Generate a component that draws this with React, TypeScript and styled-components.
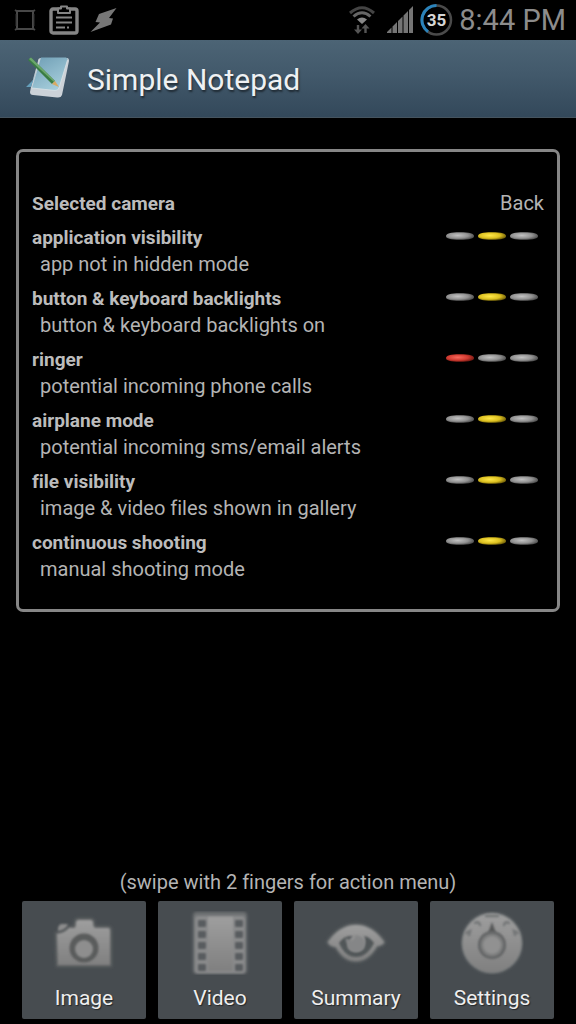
import React from "react";
import styled, { createGlobalStyle } from "styled-components";

const GlobalStyle = createGlobalStyle`
  *, *::before, *::after { box-sizing: border-box; }
  html, body { margin: 0; background: #000; }
  body {
    font-family: Roboto, "Liberation Sans", sans-serif;
    font-variant-ligatures: none;
    color: #b4b4b4;
  }
`;

const Screen = styled.div`
  min-height: 100vh;
  display: flex;
  flex-direction: column;
  background: #000;
`;

const StatusBar = styled.div`
  height: 40px;
  padding: 0 10px 0 12px;
  display: flex;
  align-items: center;
  justify-content: space-between;
  background: #000;
`;

const StatusGroup = styled.div<{ $gap: number }>`
  display: flex;
  align-items: center;
  gap: ${(p) => p.$gap}px;
`;

const Clock = styled.time`
  font-size: 29px;
  line-height: 40px;
  color: #8c8c8c;
  white-space: nowrap;
`;

const TitleBar = styled.header`
  height: 78px;
  padding: 2px 24px 0;
  display: flex;
  align-items: center;
  gap: 15px;
  background: linear-gradient(#4c6475, #42596b 45%, #33485a);
  border-bottom: 1px solid #46545f;
`;

const Title = styled.h1`
  margin: 0;
  font-size: 30px;
  line-height: 40px;
  font-weight: 400;
  color: #eef1f3;
  text-shadow: 1px 2px 2px rgba(0, 0, 0, 0.5);
`;

const Panel = styled.section`
  margin: 31px 16px 0;
  padding: 38px 13px 19px;
  border: 3px solid #868686;
  border-radius: 7px;
`;

const Row = styled.div`
  display: flex;
  justify-content: space-between;
  font-size: 20px;
  line-height: 27px;
`;

const CameraRow = styled(Row)`
  margin-bottom: 7px;
`;

const StatusRow = styled(Row)`
  height: 61px;
`;

const Name = styled.h2`
  margin: 0;
  font-size: 19px;
  line-height: 27px;
  font-weight: 700;
  color: #bcbcbc;
`;

const Detail = styled.p`
  margin: 0;
  padding-left: 8px;
`;

const Leds = styled.svg`
  flex: none;
  margin: 7px 4px 0 0;
`;

const Footer = styled.footer`
  margin-top: auto;
  padding: 16px 22px 5px;
`;

const Hint = styled.p`
  margin: 0 0 5px;
  font-size: 20px;
  line-height: 27px;
  text-align: center;
`;

const Actions = styled.nav`
  display: grid;
  grid-template-columns: repeat(4, 1fr);
  gap: 12px;
`;

const ActionButton = styled.button`
  height: 118px;
  padding: 10px 0 0;
  display: flex;
  flex-direction: column;
  align-items: center;
  gap: 9px;
  border: 0;
  border-radius: 2px;
  background: #474c50;
  color: #eee;
  font-family: inherit;
  font-size: 21px;
  line-height: 28px;
  text-shadow: 1px 1px 1px rgba(0, 0, 0, 0.5);
`;

type Lamp = "off" | "yellow" | "red";

const lampStops: Record<Lamp, [string, string, string]> = {
  off: ["#c2c2c2", "#929292", "#4c4c4c"],
  yellow: ["#ffe84a", "#dcc020", "#6d5c08"],
  red: ["#f8685c", "#d03a30", "#701812"],
};

const statuses: { name: string; detail: string; lamps: Lamp[] }[] = [
  { name: "application visibility", detail: "app not in hidden mode", lamps: ["off", "yellow", "off"] },
  { name: "button & keyboard backlights", detail: "button & keyboard backlights on", lamps: ["off", "yellow", "off"] },
  { name: "ringer", detail: "potential incoming phone calls", lamps: ["red", "off", "off"] },
  { name: "airplane mode", detail: "potential incoming sms/email alerts", lamps: ["off", "yellow", "off"] },
  { name: "file visibility", detail: "image & video files shown in gallery", lamps: ["off", "yellow", "off"] },
  { name: "continuous shooting", detail: "manual shooting mode", lamps: ["off", "yellow", "off"] },
];

const Defs = styled.svg`
  position: absolute;
`;

function SharedDefs() {
  return (
    <Defs width="0" height="0" aria-hidden="true">
      <defs>
        {(Object.keys(lampStops) as Lamp[]).map((k) => (
          <radialGradient key={k} id={`lamp-${k}`} cx="0.42" cy="0.42" r="0.62">
            <stop offset="0" stopColor={lampStops[k][0]} />
            <stop offset="0.6" stopColor={lampStops[k][1]} />
            <stop offset="1" stopColor={lampStops[k][2]} />
          </radialGradient>
        ))}
        <linearGradient id="metal" x1="0" y1="0" x2="0" y2="1">
          <stop offset="0" stopColor="#9e9e9e" />
          <stop offset="1" stopColor="#808080" />
        </linearGradient>
        <filter id="glow" x="-20%" y="-20%" width="140%" height="140%">
          <feGaussianBlur stdDeviation="1.6" />
        </filter>
        <filter id="soft" x="-20%" y="-20%" width="140%" height="140%">
          <feGaussianBlur stdDeviation="0.8" />
        </filter>
      </defs>
    </Defs>
  );
}

function LampRow({ lamps }: { lamps: Lamp[] }) {
  return (
    <Leds width="96" height="10" viewBox="0 0 96 10" role="img" aria-label={lamps.join(", ")}>
      {lamps.map((l, i) => (
        <path
          key={i}
          transform={`translate(${i * 32} 0)`}
          d="M2 5C2 2.5 6 1.2 16 1.2S30 2.5 30 5S26 8.8 16 8.8S2 7.5 2 5Z"
          fill={`url(#lamp-${l})`}
        />
      ))}
    </Leds>
  );
}

function FrameIcon() {
  return (
    <svg width="26" height="26" viewBox="0 0 26 26" fill="none" stroke="#484848" strokeWidth="2">
      <path d="M5 4H21V22H5Z" />
      <path d="M3 3L6 5M23 3L20 5M3 23L6 21M23 23L20 21" strokeWidth="2" />
      <path d="M4 7V19M22 7V19" stroke="#333" strokeWidth="1" />
    </svg>
  );
}

function ClipboardIcon() {
  return (
    <svg width="30" height="30" viewBox="0 0 30 30" fill="none" stroke="#858585">
      <rect x="2" y="4" width="26" height="24" rx="2" strokeWidth="3.4" />
      <path d="M9 8V3.5H12V1.5H18V3.5H21V8Z" fill="#000" strokeWidth="2" strokeLinejoin="round" />
      <path d="M7 12.5H23M7 17.5H23M7 22.5H16M18 22.5H20" strokeWidth="2.2" />
    </svg>
  );
}

function BoltIcon() {
  return (
    <svg width="27" height="26" viewBox="0 0 27 26" fill="#777">
      <path d="M26.500 1L9 7L5.500 15L10 15.500L0.500 25L21 17.500L23 11.500L19 11Z" />
    </svg>
  );
}

function WifiIcon() {
  return (
    <svg width="32" height="30" viewBox="0 0 32 30" fill="none" stroke="#555" strokeWidth="3">
      <path d="M2 8Q14 -2.500 26 8" stroke="#444" />
      <path d="M5.500 11.500Q14 4 22.500 11.500" stroke="#666" />
      <path d="M9 14.500Q14 10.500 19 14.500L14 19Z" fill="#888" stroke="none" />
      <path d="M10 20V26M17.500 28V22" stroke="#555" strokeWidth="2.400" />
      <path d="M6 24.500H14L10 29ZM13.500 23.500H21.500L17.500 19Z" fill="#555" stroke="none" />
    </svg>
  );
}

function SignalIcon() {
  return (
    <svg width="28" height="28" viewBox="0 0 28 28" fill="#757575">
      <path d="M1 27V26L5.500 21.500V27ZM6.500 27V20.500L11 16V27ZM12 27V15L16.500 10.500V27ZM17.500 27V9.500L22 5V27ZM23 27V4L27 0V27Z" />
    </svg>
  );
}

function BatteryIcon() {
  return (
    <svg width="33" height="34" viewBox="0 0 33 34" role="img" aria-label="Battery 35%">
      <circle cx="16.500" cy="17" r="14.500" fill="none" stroke="#4a4a4a" strokeWidth="2.500" />
      <path d="M8 28.800A14.500 14.500 0 0 1 16.500 2.500" fill="none" stroke="#2a83bb" strokeWidth="3" />
      <text x="16.500" y="23" textAnchor="middle" fontSize="17" fontWeight="700" fill="#d6d6d6">35</text>
    </svg>
  );
}

function NotepadIcon() {
  return (
    <svg width="48" height="48" viewBox="0 0 48 48">
      <defs>
        <linearGradient id="cover" x1="0" y1="0" x2="0.6" y2="1">
          <stop offset="0" stopColor="#6e9db4" />
          <stop offset="1" stopColor="#a5cddb" />
        </linearGradient>
      </defs>
      <path d="M17 2H43Q45 2 45 5L38 39Q37 42 33 41.500L9 39Q6 39 6 36L7 31L14 5Q14 2 17 2Z" fill="#ccd2d8" />
      <path d="M17 1.500H42Q44 2 43.500 4L35 32Q34 34.500 31 34.500L8 32Z" fill="url(#cover)" />
      <path d="M43.500 4L35 32Q34 34.500 31 34.500L8 32" fill="none" stroke="#dbe3e7" strokeWidth="0.800" />
      <path d="M7 31L13 13L9 24L2 31Z" fill="#659fbb" />
      <path d="M4 4L7 1.500L31 25L28 28Z" fill="#397c43" />
      <path d="M5 3L7 1.500L31 25L30 26Z" fill="#6ba66c" />
      <path d="M28 28L31 25L35 31Z" fill="#d9aa62" />
    </svg>
  );
}

function CameraIcon() {
  const body = "M5 23Q13 22 17 17H22Q24 17 24 12Q24 9 27 9H38Q41 9 41 12Q41 17 44 17H56Q58 17 58 20V54H6Z";
  return (
    <svg width="64" height="64" viewBox="0 0 64 64">
      <path d={body} fill="#5e6264" stroke="#5e6264" strokeWidth="4" filter="url(#glow)" />
      <path d={body} fill="url(#metal)" filter="url(#soft)" />
      <path d="M6 20V17Q7 13 10 13H16Q14 19 6 20Z" fill="#8c8c8c" filter="url(#soft)" />
      <circle cx="32" cy="37" r="14.500" fill="#5a5b5c" filter="url(#soft)" />
      <circle cx="32" cy="38" r="9" fill="#8e8e8e" filter="url(#soft)" />
    </svg>
  );
}

function FilmIcon() {
  return (
    <svg width="64" height="64" viewBox="0 0 64 64">
      <rect x="5" y="1" width="54" height="62" rx="4" fill="#707375" filter="url(#glow)" />
      <rect x="7" y="5" width="50" height="57" rx="3" fill="#8a8b8c" filter="url(#soft)" />
      <rect x="20" y="6" width="25" height="54" fill="url(#metal)" filter="url(#soft)" />
      {[9, 20, 31, 42, 53].map((y) => (
        <g key={y} fill="#585c5e" filter="url(#soft)">
          <rect x="10" y={y} width="8" height="7" rx="1" />
          <rect x="47" y={y} width="8" height="7" rx="1" />
        </g>
      ))}
    </svg>
  );
}

function EyeIcon() {
  const outline = "M4 31Q16 14 32 14T60 31Q59 34 53 35Q44 50 32 50T12 36Q5 35 4 31Z";
  return (
    <svg width="64" height="64" viewBox="0 0 64 64">
      <path d={outline} fill="#626668" stroke="#626668" strokeWidth="3" filter="url(#glow)" />
      <path d={outline} fill="url(#metal)" filter="url(#soft)" />
      <path d="M15 32Q20 24 29 25Q24 29 24 34Q26 41 32 41T41 33Q42 28 40 25Q46 26 50 32Q43 46 32 46T15 32Z" fill="#515658" filter="url(#soft)" />
      <path d="M22 27Q31 33 31 24Q41 25 41 33T32 41T23 33Q21 29 22 27Z" fill="#858687" filter="url(#soft)" />
    </svg>
  );
}

function DialIcon() {
  return (
    <svg width="64" height="64" viewBox="0 0 64 64">
      <circle cx="32" cy="32" r="30.500" fill="#707476" filter="url(#glow)" />
      <circle cx="32" cy="32" r="29.500" fill="url(#metal)" filter="url(#soft)" />
      <g fill="none" stroke="#727476" strokeWidth="2.500" strokeLinecap="round" filter="url(#soft)">
        <path d="M6 22L10 20L9 24M15 12Q19 10 20 14M26 5H38M44 14Q45 10 49 12M55 24L54 20L58 22" />
      </g>
      <path d="M32 11L36 22H28Z" fill="#565859" filter="url(#soft)" />
      <circle cx="32" cy="34" r="14" fill="#626465" filter="url(#soft)" />
      <circle cx="32" cy="34" r="11.500" fill="#7c7d7d" filter="url(#soft)" />
      <circle cx="32" cy="34" r="9" fill="#919191" filter="url(#soft)" />
    </svg>
  );
}

const actions = [
  { label: "Image", Icon: CameraIcon },
  { label: "Video", Icon: FilmIcon },
  { label: "Summary", Icon: EyeIcon },
  { label: "Settings", Icon: DialIcon },
];

export default function App() {
  return (
    <Screen>
      <GlobalStyle />
      <SharedDefs />
      <StatusBar>
        <StatusGroup $gap={11}>
          <FrameIcon />
          <ClipboardIcon />
          <BoltIcon />
        </StatusGroup>
        <StatusGroup $gap={6}>
          <WifiIcon />
          <SignalIcon />
          <BatteryIcon />
          <Clock>8:44 PM</Clock>
        </StatusGroup>
      </StatusBar>
      <TitleBar>
        <NotepadIcon />
        <Title>Simple Notepad</Title>
      </TitleBar>
      <main>
        <Panel>
          <CameraRow>
            <Name>Selected camera</Name>
            <span>Back</span>
          </CameraRow>
          {statuses.map((s) => (
            <StatusRow key={s.name}>
              <div>
                <Name>{s.name}</Name>
                <Detail>{s.detail}</Detail>
              </div>
              <LampRow lamps={s.lamps} />
            </StatusRow>
          ))}
        </Panel>
      </main>
      <Footer>
        <Hint>(swipe with 2 fingers for action menu)</Hint>
        <Actions>
          {actions.map(({ label, Icon }) => (
            <ActionButton key={label} type="button">
              <Icon />
              {label}
            </ActionButton>
          ))}
        </Actions>
      </Footer>
    </Screen>
  );
}
